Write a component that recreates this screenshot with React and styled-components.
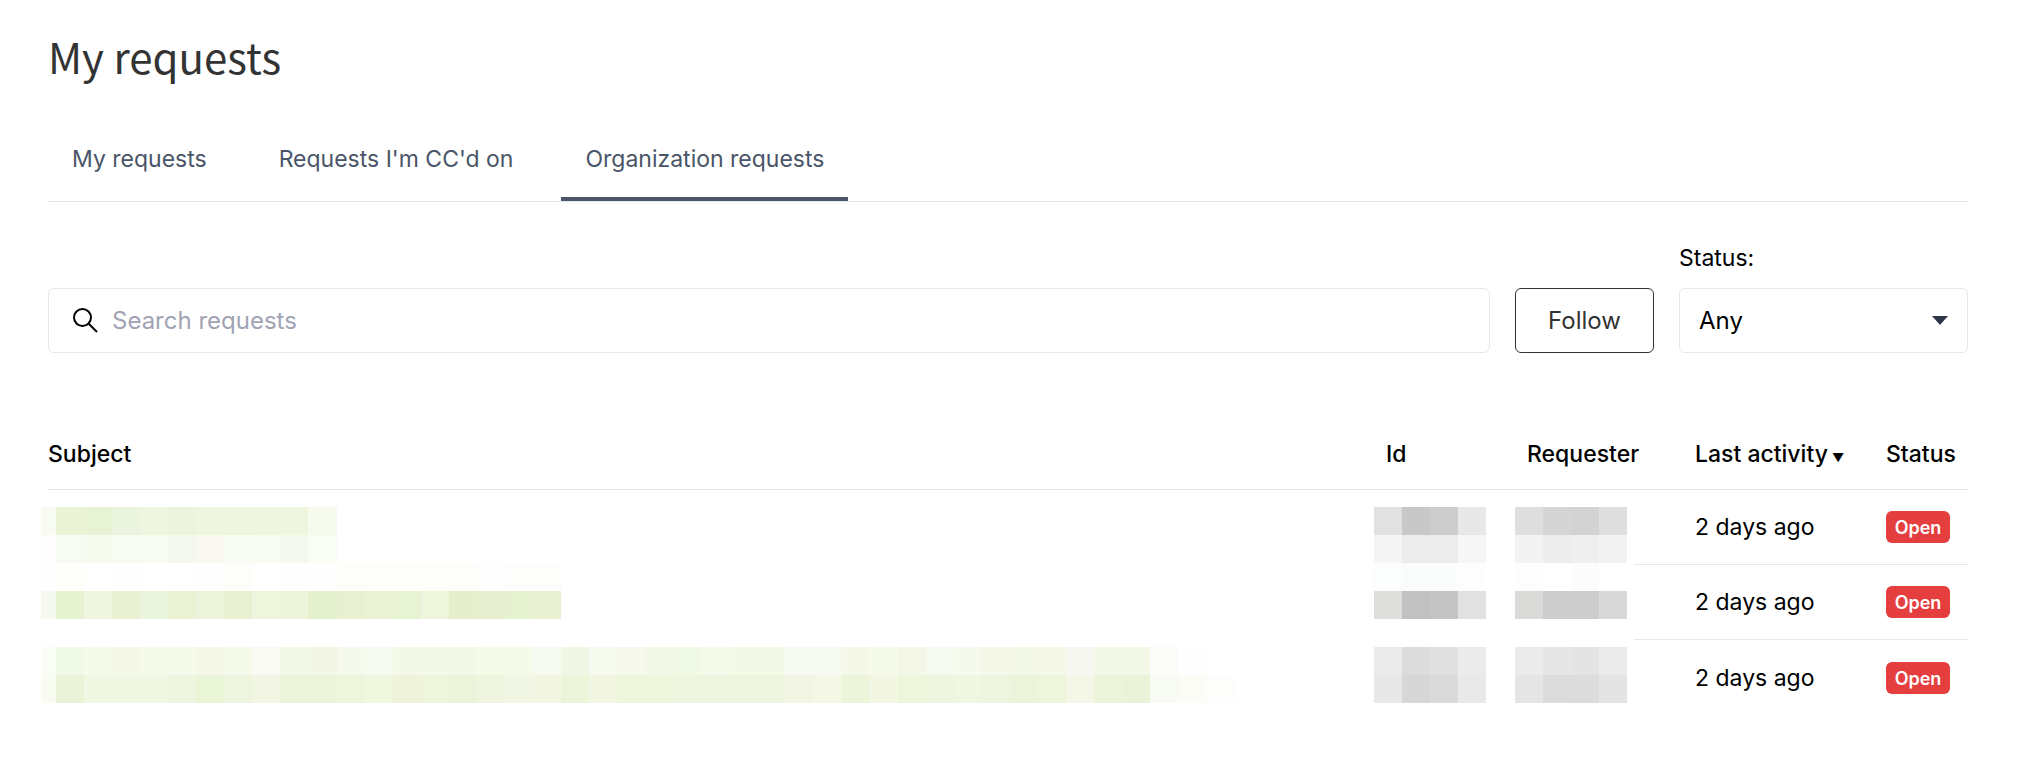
import React, {useState} from 'react';
import styled, {createGlobalStyle} from 'styled-components';

const GlobalStyle = createGlobalStyle`
    body {
        margin: 0;
        background: #fff;
        color: #000;
        font-family: Inter, "Liberation Sans", sans-serif;
        font-size: 23px;
        line-height: 32px;
    }

    * {
        box-sizing: border-box;
    }
`;

const Wrapper = styled.main`
    padding: 24px 52px 40px 48px;
`;

const Title = styled.h1`
    margin: 0;
    color: #333;
    font-family: "Noto Sans CJK JP", "Noto Sans", sans-serif;
    font-size: 42px;
    font-weight: 400;
    line-height: 64px;
`;

const Tabs = styled.nav`
    display: flex;
    gap: 24px;
    margin-top: 55px;
    border-bottom: 1px solid #e2e8f0;
`;

const Tab = styled.a`
    padding: 0 24px 22px;
    border-bottom: 4px solid ${props => props.$active ? '#4a5568' : 'transparent'};
    color: #4a5568;
    text-decoration: none;
`;

const Filters = styled.form`
    display: flex;
    align-items: flex-end;
    gap: 25px;
    margin-top: 40px;
`;

const SearchBox = styled.label`
    display: flex;
    flex: 1;
    align-items: center;
    gap: 14px;
    height: 65px;
    padding: 0 24px;
    border: 1px solid #e2e8f0;
    border-radius: 6px;
    font-size: 24px;
`;

const SearchInput = styled.input`
    flex: 1;
    min-width: 0;
    padding: 0;
    border: 0;
    outline: 0;
    background: transparent;
    font: inherit;

    &::placeholder {
        color: #9fa3b3;
        opacity: 1;
    }
`;

const FollowButton = styled.button`
    width: 139px;
    height: 65px;
    padding: 0;
    border: 1px solid #333;
    border-radius: 6px;
    background: #fff;
    color: #333;
    font: inherit;
    font-size: 24px;
    cursor: pointer;
`;

const StatusField = styled.div`
    width: 289px;
`;

const StatusLabel = styled.label`
    display: block;
    margin-bottom: 14px;
`;

const SelectBox = styled.div`
    position: relative;
`;

const Select = styled.select`
    display: block;
    width: 100%;
    height: 65px;
    padding: 0 19px;
    border: 1px solid #e2e8f0;
    border-radius: 6px;
    background: #fff;
    color: #000;
    font: inherit;
    font-size: 24px;
    appearance: none;
`;

const SelectArrow = styled.svg`
    position: absolute;
    top: 28px;
    right: 20px;
    pointer-events: none;
`;

const Table = styled.table`
    width: 100%;
    margin-top: 85px;
    border-collapse: separate;
    border-spacing: 0;
    table-layout: fixed;
`;

const Col = styled.col`
    width: ${props => props.$width};
`;

const HeadCell = styled.th`
    padding: 0 0 19px ${props => props.$indent || 0}px;
    border-bottom: 1px solid #e2e8f0;
    font-weight: 500;
    text-align: left;
    white-space: nowrap;
`;

const SortMark = styled.span`
    margin-left: 4px;
    font-size: 12px;
    line-height: 1;
`;

const Cell = styled.td`
    height: 75px;
    padding: 0 0 0 ${props => props.$indent || 0}px;
    border-bottom: ${props => props.$line ? '1px solid #e2e8f0' : '0'};
    white-space: nowrap;
`;

const MosaicCell = styled.td`
    padding: ${props => props.$top}px 0 0;
    vertical-align: top;
`;

const MosaicSvg = styled.svg`
    display: block;
    margin-left: ${props => props.$shift ? '-7px' : '0'};
    overflow: visible;
`;

const Badge = styled.span`
    display: block;
    width: 64px;
    height: 32px;
    border-radius: 6px;
    background: #e53e3e;
    color: #fff;
    font-size: 18px;
    font-weight: 600;
    line-height: 34px;
    text-align: center;
`;

const TILE = 28.05;

const requests = [
    {
        top: 17,
        subject: [
            'f7fbf1 eaf3d6 e8f2d4 ebf4de eef6df ecf4dd eef6df eef6df eef6df eef6df f7fbee',
            'fefcfc f7fbf1 f6faef f8fbf2 f8fbf2 f5f8ef f9f9f1 f9fcf3 f8fbf2 f5f8ef f9fdf6',
            'fefefe fefefb fff fefefe fff fff fefefe fdfdfa fff fefefe fefefe fdfdfa fdfdfa fdfdfa fdfdfa fdfdfa fefefe fdfdfb fdfdfb'
        ],
        id: ['e1e1e1 c8c8c8 cdcdcd e8e8e8', 'f5f5f5 ececec ececec f6f6f6', 'fcfdfd fafcfb fbfcfc fdfdfd'],
        requester: ['dedede d5d5d5 d3d3d3 dedede', 'f3f3f3 ededed efefef f3f3f3', 'fdfdfd fff fcfcfc fff'],
        activity: '2 days ago',
        status: 'Open'
    },
    {
        top: 26,
        subject: [
            'f6f9ef e7f3d0 eef6df e8f2d3 ebf4dc e9f2d3 ecf5dc e7f1d1 edf5dd ecf4dc e5f0cc e8f0d1 e9f2d4 e8f3d3 edf5dc e6eecb e6efcf e6f2cf e8f1d1'
        ],
        id: ['dededb c1c1c1 c4c4c4 e1e1e1'],
        requester: ['dadad8 cdcdcd cdcdcd d9d9d9'],
        activity: '2 days ago',
        status: 'Open'
    },
    {
        top: 7,
        subject: [
            'fafdf6 f0f8e8 f5faea f5f8e8 f6faeb f6faeb f5f8e9 f6faea f9faf3 f1f8e5 f3f6e5 f6faec f6faf0 f4f8e7 f4f8e7 f4f8e6 f5fae9 f5fae9 f6faf0 f0f8e5 f6faef f5f8eb f3f7e5 f0f8e6 f6faeb f4f8e7 f4f8e7 f7faf0 f7faf0 f5f8e9 f6faeb f4f7e7 f7faf0 f6faec f5f8e9 f3f7e5 f5f8e7 f5f7f0 f4f8e7 f4f8e7 fbfcf8 fefefe',
            'f8fcf1 eaf3d7 f0f7e2 f0f7e2 f0f7e2 eef5de eaf4d7 eef5df f2f5e4 ebf4d9 ebf4da edf5dc eff7df eff3dc edf5dc ebf4db f0f5df f2f6e5 f2f6e3 ecf5da f1f5e1 edf6db edf6db eef5de eef5de eef5de eef5de f2f5e3 f4f7e6 ecf5da f2f6e3 edf5da edf5de f0f7e1 eef5df ebf4da edf6dc f4f7e7 ecf5da eaf3d7 f8fbf3 fbfcf6 fdfdfb'
        ],
        id: ['ebebeb dcdcdc e0e0e0 ebebeb', 'e7e7e7 d7d7d7 dadada e9e9e9'],
        requester: ['ebebeb e6e6e6 e4e4e4 ebebeb', 'e5e5e5 dbdbdb dcdcdc e4e4e4'],
        activity: '2 days ago',
        status: 'Open'
    }
];

// pixelated block that hides private data, the first subject tile is cut in half
function Mosaic({tiers, half}) {
    return (
        <MosaicSvg width="112" height="28" $shift={half} shapeRendering="crispEdges" aria-hidden="true">
            {tiers.map((tier, y) => tier.split(' ').map((color, x) => (
                <rect
                    key={y + '-' + x}
                    x={half && x > 0 ? 15 + (x - 1) * TILE : x * TILE}
                    y={y * 28}
                    width={half && x === 0 ? 15 : TILE}
                    height="28"
                    fill={'#' + color}/>
            )))}
        </MosaicSvg>
    );
}

function App() {
    const [query, setQuery] = useState('');
    const [status, setStatus] = useState('any');

    return (
        <Wrapper>
            <GlobalStyle />
            <Title>My requests</Title>
            <Tabs>
                <Tab href="#my">My requests</Tab>
                <Tab href="#ccd">Requests I'm CC'd on</Tab>
                <Tab href="#organization" $active aria-current="page">Organization requests</Tab>
            </Tabs>
            <Filters onSubmit={e => e.preventDefault()}>
                <SearchBox>
                    <svg width="25" height="26" viewBox="0 0 25 26" fill="none" stroke="#000" strokeWidth="2" aria-hidden="true">
                        <circle cx="9.5" cy="9.5" r="8.5"/>
                        <path d="M15.5 15.5L24 24"/>
                    </svg>
                    <SearchInput
                        type="text"
                        aria-label="Search requests"
                        placeholder="Search requests"
                        value={query}
                        onChange={e => setQuery(e.target.value)}/>
                </SearchBox>
                <FollowButton type="button">Follow</FollowButton>
                <StatusField>
                    <StatusLabel htmlFor="status">Status:</StatusLabel>
                    <SelectBox>
                        <Select id="status" value={status} onChange={e => setStatus(e.target.value)}>
                            <option value="any">Any</option>
                            <option value="open">Open</option>
                        </Select>
                        <SelectArrow width="16" height="9" viewBox="0 0 16 9" aria-hidden="true">
                            <path d="M0 0h16L8 9z" fill="#2d3748"/>
                        </SelectArrow>
                    </SelectBox>
                </StatusField>
            </Filters>
            <Table>
                <colgroup>
                    <Col />
                    <Col $width="141px" />
                    <Col $width="119px" />
                    <Col $width="252px" />
                    <Col $width="82px" />
                </colgroup>
                <thead>
                    <tr>
                        <HeadCell>Subject</HeadCell>
                        <HeadCell $indent={12}>Id</HeadCell>
                        <HeadCell $indent={12}>Requester</HeadCell>
                        <HeadCell $indent={61}>Last activity<SortMark>▼</SortMark></HeadCell>
                        <HeadCell>Status</HeadCell>
                    </tr>
                </thead>
                <tbody>
                    {requests.map((request, i) => (
                        <tr key={i}>
                            <MosaicCell $top={request.top}><Mosaic tiers={request.subject} half/></MosaicCell>
                            <MosaicCell $top={request.top}><Mosaic tiers={request.id}/></MosaicCell>
                            <MosaicCell $top={request.top}><Mosaic tiers={request.requester}/></MosaicCell>
                            <Cell $indent={61} $line={i < requests.length - 1}>{request.activity}</Cell>
                            <Cell $line={i < requests.length - 1}><Badge>{request.status}</Badge></Cell>
                        </tr>
                    ))}
                </tbody>
            </Table>
        </Wrapper>
    );
}

export default App;
